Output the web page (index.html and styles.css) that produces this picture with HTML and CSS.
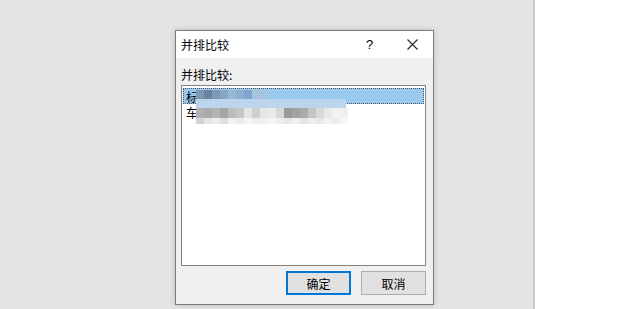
FILE: index.html
```html
<!DOCTYPE html>
<html>
<head>
<meta charset="utf-8">
<link rel="stylesheet" href="styles.css">
</head>
<body>
<div class="screen">
  <div class="workspace">
    <div class="dialog">
      <div class="titlebar">
        <span class="title">并排比较</span>
        <span class="help">?</span>
        <svg class="close" width="11" height="11" viewBox="0 0 11 11"><path d="M0.5 0.5L10.5 10.5M10.5 0.5L0.5 10.5" stroke="#222" stroke-width="1.1" fill="none"/></svg>
      </div>
      <div class="body">
        <div class="label">并排比较:</div>
        <div class="listbox">
          <div class="item selected">标</div>
          <div class="item">车</div>
          <div class="blur">
            <div class="brow h9">
              <i style="background:#7f97ae"></i><i style="background:#6a84a0"></i><i style="background:#7d99b5"></i><i style="background:#87a6c4"></i><i style="background:#97b7d3"></i><i style="background:#8cb0d3"></i><i style="background:#7ea6d1"></i><i class="w15" style="background:#a7c3dd"></i>
            </div>
            <div class="brow h9">
              <i class="w150" style="background:#bcd5ec"></i>
            </div>
            <div class="brow h10">
              <i style="background:#b2b2b2"></i><i style="background:#aaaaaa"></i><i style="background:#b4b4b4"></i><i style="background:#a5a5a5"></i><i style="background:#bcbcbc"></i><i style="background:#c6c6c6"></i><i style="background:#e4e4e4"></i><i style="background:#cfcfcf"></i><i style="background:#e6e6e6"></i><i style="background:#eaeaea"></i><i style="background:#d8d8d8"></i><i style="background:#9a9a9a"></i><i style="background:#a3a3a3"></i><i style="background:#aaaaaa"></i><i style="background:#c4c4c4"></i><i style="background:#d9d9d9"></i><i style="background:#e8e8e8"></i><i style="background:#f2f2f2"></i><i style="background:#efefef"></i>
            </div>
            <div class="brow h6">
              <i style="background:#d4d4d4"></i><i style="background:#e6e6e6"></i><i style="background:#ececec"></i><i style="background:#e0e0e0"></i><i style="background:#f2f2f2"></i><i style="background:#ebebeb"></i><i style="background:#f5f5f5"></i><i style="background:#eeeeee"></i><i style="background:#f0f0f0"></i><i style="background:#f4f4f4"></i><i style="background:#ededed"></i><i style="background:#e8e8e8"></i><i style="background:#f1f1f1"></i><i style="background:#e5e5e5"></i><i style="background:#eeeeee"></i><i style="background:#e9e9e9"></i><i style="background:#f3f3f3"></i><i style="background:#ececec"></i><i style="background:#f6f6f6"></i>
            </div>
          </div>
        </div>
        <div class="buttons">
          <button class="btn primary">确定</button>
          <button class="btn">取消</button>
        </div>
      </div>
    </div>
  </div>
  <div class="divider"></div>
  <div class="page"></div>
</div>
</body>
</html>
```

FILE: styles.css
```css
* { box-sizing: border-box; }
html, body { margin: 0; padding: 0; }
body {
  width: 620px;
  height: 309px;
  overflow: hidden;
  font-family: "Noto Sans CJK SC", "Noto Sans", sans-serif;
  font-size: 12px;
  color: #000;
}
.screen { display: flex; height: 309px; }
.workspace {
  width: 533px;
  background: #e4e4e4;
  padding: 30px 0 0 175px;
}
.divider { width: 2px; background: #c8c8c8; }
.page { flex: 1; background: #fff; }

.dialog {
  width: 259px;
  height: 275px;
  border: 1px solid #7a7a7a;
  background: #f0f0f0;
  box-shadow: 0 0 6px rgba(0,0,0,0.18);
  display: flex;
  flex-direction: column;
}
.titlebar {
  height: 27px;
  background: #fff;
  display: flex;
  align-items: center;
  padding-left: 5px;
}
.title { flex: 1; line-height: 14px; }
.help { width: 12px; margin-right: 29px; font-family: "Liberation Sans", sans-serif; font-size: 13px; }
.close { margin-right: 15px; }

.body {
  flex: 1;
  padding: 10px 6px 0 5px;
  display: flex;
  flex-direction: column;
}
.label { height: 17px; line-height: 14px; }
.listbox {
  position: relative;
  width: 245px;
  height: 181px;
  border: 1px solid #828282;
  background: #fff;
  padding: 2px 1px 1px;
}
.item {
  height: 16px;
  line-height: 15px;
  padding-left: 2px;
  border: 1px dotted transparent;
}
.item.selected {
  background: #99c9ef;
  border-color: #555;
}
.blur {
  position: absolute;
  left: 14px;
  top: 4px;
  width: 152px;
}
.brow { display: flex; }
.brow i { display: block; width: 8px; height: 100%; }
.brow i.w15 { width: 15px; }
.brow i.w150 { width: 150px; }
.h9 { height: 9px; }
.h10 { height: 10px; }
.h6 { height: 6px; }

.buttons {
  display: flex;
  justify-content: flex-end;
  gap: 10px;
  margin-top: 5px;
  padding-right: 1px;
}
.btn {
  width: 65px;
  height: 24px;
  margin: 0;
  padding: 0;
  background: #e1e1e1;
  border: 1px solid #adadad;
  font-family: "Noto Sans CJK SC", sans-serif;
  font-size: 12px;
  color: #000;
}
.btn.primary { border: 2px solid #0078d7; }
```
